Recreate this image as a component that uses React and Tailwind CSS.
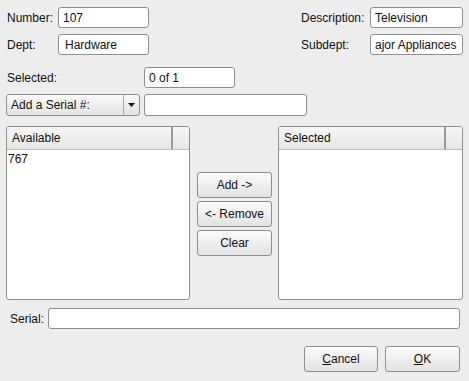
import React from 'react';

const FONT = { fontFamily: '"Liberation Sans", Arial, sans-serif' };

function Field({ value, className = '' }) {
  return (
    <div
      className={`h-[21px] bg-white border border-[#8e8e8e] rounded-[3px] pl-[4px] flex items-center overflow-hidden whitespace-nowrap ${className}`}
    >
      {value}
    </div>
  );
}

function Button({ children, className = '' }) {
  return (
    <div
      className={`h-[26px] flex items-center justify-center border border-[#8e8e8e] rounded-[3px] bg-gradient-to-b from-[#fbfbfb] to-[#e2e2e2] ${className}`}
    >
      {children}
    </div>
  );
}

function ListBox({ title, items, className = '' }) {
  return (
    <div className={`h-[174px] bg-white border border-[#8e8e8e] rounded-[3px] flex flex-col overflow-hidden ${className}`}>
      <div className="h-[23px] flex bg-gradient-to-b from-[#f6f6f6] to-[#e6e6e6] border-b border-[#bdbdbd]">
        <div className="flex-1 flex items-center pl-[5px] border-r-2 border-[#9a9a9a]">{title}</div>
        <div className="w-[16px]" />
      </div>
      <div className="flex flex-col pl-[1px] pt-[1px]">
        {items.map((it) => (
          <div key={it} className="h-[16px] leading-[16px]">{it}</div>
        ))}
      </div>
    </div>
  );
}

export default function App() {
  return (
    <div
      className="w-[469px] h-[381px] bg-[#ededed] text-[12px] text-[#111] pt-[7px] pl-[6px] pr-[6px] flex flex-col"
      style={FONT}
    >
      <div className="flex justify-between">
        <div className="flex flex-col gap-[6px]">
          <div className="flex items-center">
            <span className="w-[52px] pl-[1px]">Number:</span>
            <Field value="107" className="w-[91px]" />
          </div>
          <div className="flex items-center">
            <span className="w-[52px] pl-[1px]">Dept:</span>
            <Field value="Hardware" className="w-[91px] pl-[6px]" />
          </div>
        </div>
        <div className="flex flex-col gap-[6px]">
          <div className="flex items-center">
            <span className="w-[69px]">Description:</span>
            <Field value="Television" className="w-[93px]" />
          </div>
          <div className="flex items-center">
            <span className="w-[69px]">Subdept:</span>
            <Field value="ajor Appliances" className="w-[93px] pl-[1px]" />
          </div>
        </div>
      </div>

      <div className="flex items-center mt-[12px]">
        <span className="w-[138px] pl-[1px]">Selected:</span>
        <Field value="0 of 1" className="w-[91px]" />
      </div>

      <div className="flex items-center mt-[6px] gap-[4px]">
        <div className="w-[134px] h-[22px] flex border border-[#8e8e8e] rounded-[3px] bg-gradient-to-b from-[#fbfbfb] to-[#e2e2e2]">
          <div className="flex-1 flex items-center pl-[4px] border-r border-[#a8a8a8]">Add a Serial #:</div>
          <div className="w-[15px] flex items-center justify-center">
            <svg width="7" height="4" viewBox="0 0 7 4">
              <path d="M0 0H7L3.5 4Z" fill="#111" />
            </svg>
          </div>
        </div>
        <Field value="" className="w-[163px] h-[22px]" />
      </div>

      <div className="flex mt-[10px]">
        <ListBox title="Available" items={['767']} className="w-[184px]" />
        <div className="w-[75px] ml-[7px] mr-[6px] pt-[46px] flex flex-col gap-[3px]">
          <Button>Add -&gt;</Button>
          <Button>&lt;- Remove</Button>
          <Button>Clear</Button>
        </div>
        <ListBox title="Selected" items={[]} className="w-[185px]" />
      </div>

      <div className="flex items-center mt-[8px] pl-[4px]">
        <span className="w-[38px]">Serial:</span>
        <Field value="" className="w-[412px]" />
      </div>

      <div className="flex justify-end gap-[7px] mt-[17px] pr-[3px]">
        <Button className="w-[74px] h-[25px]">
          <span><span className="underline">C</span>ancel</span>
        </Button>
        <Button className="w-[75px] h-[25px]">
          <span><span className="underline">O</span>K</span>
        </Button>
      </div>
    </div>
  );
}
